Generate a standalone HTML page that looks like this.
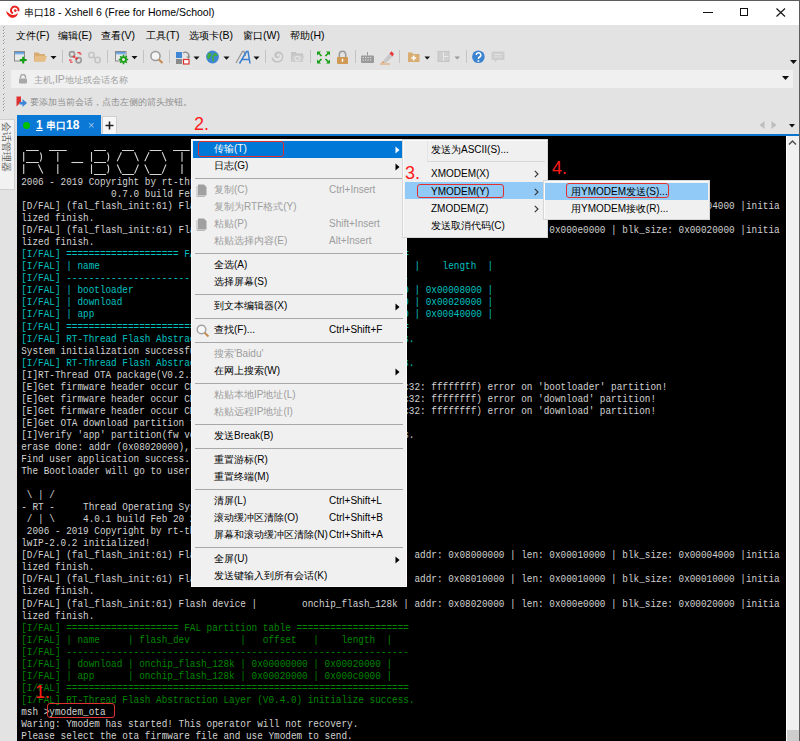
<!DOCTYPE html>
<html><head><meta charset="utf-8"><style>
*{margin:0;padding:0;box-sizing:border-box}
html,body{width:800px;height:741px;overflow:hidden}
body{position:relative;background:#e3e3e3;font-family:"Liberation Sans",sans-serif;font-size:11px;color:#000}
.a{position:absolute}
.t{position:absolute;white-space:pre;font-family:"Liberation Mono",monospace;font-size:11.665px;line-height:12px;transform:scaleX(0.80314);transform-origin:0 0}
.mi{position:absolute;white-space:nowrap;font-size:10px;line-height:15px}
.cj{font-size:9.7px}
.s9 .cj{font-size:9.45px}
.num{position:absolute;font-size:18px;line-height:20px;color:#ff1a1a}
.ui{position:absolute;white-space:nowrap;font-size:10.5px;line-height:14px}
</style></head>
<body>
<div class="a" style="left:0;top:0;width:800px;height:1px;background:#5c5c5c"></div>
<div class="a" style="left:0;top:1px;width:799px;height:24px;background:#fff"></div>
<div class="a" style="left:799px;top:0;width:1px;height:741px;background:#5c5c5c"></div>

<!-- title -->
<svg class="a" style="left:0;top:0" width="24" height="24" viewBox="0 0 24 24">
 <path d="M6.2 10.9 C6.8 15.6 10.4 18.1 13.6 17.7 C16.2 17.4 18 15.2 17.8 12.8 C16.6 14.5 14.6 15.3 12.5 14.9 C10 14.4 8.4 12.6 6.2 10.9 Z" fill="#e8231e"/>
 <path d="M18.3 11.3 A3.7 3.7 0 1 0 12.9 13.4" fill="none" stroke="#e8231e" stroke-width="1.9"/>
 <circle cx="15.3" cy="10.6" r="1.3" fill="#e8231e"/>
</svg>
<div class="ui" style="left:23.5px;top:5px;font-size:10.5px;line-height:15px;color:#000"><span class="cj">串口</span>18 - Xshell 6 (Free for Home/School)</div>
<div class="a" style="left:703px;top:12px;width:10px;height:1px;background:#111"></div>
<div class="a" style="left:740px;top:8px;width:8px;height:8px;border:1px solid #111"></div>
<svg class="a" style="left:776px;top:8px" width="10" height="9" viewBox="0 0 10 9"><path d="M0.5 0.5 L9 8.5 M9 0.5 L0.5 8.5" stroke="#111" stroke-width="1.1"/></svg>
<!-- grip -->
<svg class="a" style="left:0;top:0" width="8" height="116"><rect x="3" y="27" width="1" height="1" fill="#909090"/><rect x="4" y="26" width="1" height="1" fill="#b4b4b4"/><rect x="4" y="27" width="1" height="1" fill="#f2f2f2"/><rect x="3" y="30" width="1" height="1" fill="#909090"/><rect x="4" y="29" width="1" height="1" fill="#b4b4b4"/><rect x="4" y="30" width="1" height="1" fill="#f2f2f2"/><rect x="3" y="33" width="1" height="1" fill="#909090"/><rect x="4" y="32" width="1" height="1" fill="#b4b4b4"/><rect x="4" y="33" width="1" height="1" fill="#f2f2f2"/><rect x="3" y="36" width="1" height="1" fill="#909090"/><rect x="4" y="35" width="1" height="1" fill="#b4b4b4"/><rect x="4" y="36" width="1" height="1" fill="#f2f2f2"/><rect x="3" y="40" width="1" height="1" fill="#909090"/><rect x="4" y="39" width="1" height="1" fill="#b4b4b4"/><rect x="4" y="40" width="1" height="1" fill="#f2f2f2"/><rect x="3" y="43" width="1" height="1" fill="#909090"/><rect x="4" y="42" width="1" height="1" fill="#b4b4b4"/><rect x="4" y="43" width="1" height="1" fill="#f2f2f2"/><rect x="3" y="49" width="1" height="1" fill="#909090"/><rect x="4" y="48" width="1" height="1" fill="#b4b4b4"/><rect x="4" y="49" width="1" height="1" fill="#f2f2f2"/><rect x="3" y="52" width="1" height="1" fill="#909090"/><rect x="4" y="51" width="1" height="1" fill="#b4b4b4"/><rect x="4" y="52" width="1" height="1" fill="#f2f2f2"/><rect x="3" y="56" width="1" height="1" fill="#909090"/><rect x="4" y="55" width="1" height="1" fill="#b4b4b4"/><rect x="4" y="56" width="1" height="1" fill="#f2f2f2"/><rect x="3" y="59" width="1" height="1" fill="#909090"/><rect x="4" y="58" width="1" height="1" fill="#b4b4b4"/><rect x="4" y="59" width="1" height="1" fill="#f2f2f2"/><rect x="3" y="62" width="1" height="1" fill="#909090"/><rect x="4" y="61" width="1" height="1" fill="#b4b4b4"/><rect x="4" y="62" width="1" height="1" fill="#f2f2f2"/><rect x="3" y="65" width="1" height="1" fill="#909090"/><rect x="4" y="64" width="1" height="1" fill="#b4b4b4"/><rect x="4" y="65" width="1" height="1" fill="#f2f2f2"/><rect x="3" y="72" width="1" height="1" fill="#909090"/><rect x="4" y="71" width="1" height="1" fill="#b4b4b4"/><rect x="4" y="72" width="1" height="1" fill="#f2f2f2"/><rect x="3" y="75" width="1" height="1" fill="#909090"/><rect x="4" y="74" width="1" height="1" fill="#b4b4b4"/><rect x="4" y="75" width="1" height="1" fill="#f2f2f2"/><rect x="3" y="78" width="1" height="1" fill="#909090"/><rect x="4" y="77" width="1" height="1" fill="#b4b4b4"/><rect x="4" y="78" width="1" height="1" fill="#f2f2f2"/><rect x="3" y="81" width="1" height="1" fill="#909090"/><rect x="4" y="80" width="1" height="1" fill="#b4b4b4"/><rect x="4" y="81" width="1" height="1" fill="#f2f2f2"/><rect x="3" y="85" width="1" height="1" fill="#909090"/><rect x="4" y="84" width="1" height="1" fill="#b4b4b4"/><rect x="4" y="85" width="1" height="1" fill="#f2f2f2"/><rect x="3" y="88" width="1" height="1" fill="#909090"/><rect x="4" y="87" width="1" height="1" fill="#b4b4b4"/><rect x="4" y="88" width="1" height="1" fill="#f2f2f2"/><rect x="3" y="94" width="1" height="1" fill="#909090"/><rect x="4" y="93" width="1" height="1" fill="#b4b4b4"/><rect x="4" y="94" width="1" height="1" fill="#f2f2f2"/><rect x="3" y="98" width="1" height="1" fill="#909090"/><rect x="4" y="97" width="1" height="1" fill="#b4b4b4"/><rect x="4" y="98" width="1" height="1" fill="#f2f2f2"/><rect x="3" y="101" width="1" height="1" fill="#909090"/><rect x="4" y="100" width="1" height="1" fill="#b4b4b4"/><rect x="4" y="101" width="1" height="1" fill="#f2f2f2"/><rect x="3" y="104" width="1" height="1" fill="#909090"/><rect x="4" y="103" width="1" height="1" fill="#b4b4b4"/><rect x="4" y="104" width="1" height="1" fill="#f2f2f2"/><rect x="3" y="107" width="1" height="1" fill="#909090"/><rect x="4" y="106" width="1" height="1" fill="#b4b4b4"/><rect x="4" y="107" width="1" height="1" fill="#f2f2f2"/><rect x="3" y="110" width="1" height="1" fill="#909090"/><rect x="4" y="109" width="1" height="1" fill="#b4b4b4"/><rect x="4" y="110" width="1" height="1" fill="#f2f2f2"/></svg>
<!-- menu bar -->
<div class="ui" style="left:16px;top:28px;color:#000"><span class="cj">文件</span>(F)</div>
<div class="ui" style="left:58px;top:28px;color:#000"><span class="cj">编辑</span>(E)</div>
<div class="ui" style="left:101px;top:28px;color:#000"><span class="cj">查看</span>(V)</div>
<div class="ui" style="left:146px;top:28px;color:#000"><span class="cj">工具</span>(T)</div>
<div class="ui" style="left:189px;top:28px;color:#000"><span class="cj">选项卡</span>(B)</div>
<div class="ui" style="left:243px;top:28px;color:#000"><span class="cj">窗口</span>(W)</div>
<div class="ui" style="left:290px;top:28px;color:#000"><span class="cj">帮助</span>(H)</div>
<!-- toolbar -->
<svg class="a" style="left:0;top:0" width="520" height="70" viewBox="0 0 520 70">
 <defs>
  <linearGradient id="wb" x1="0" y1="0" x2="0" y2="1"><stop offset="0" stop-color="#4b8fd6"/><stop offset="1" stop-color="#9cc8f0"/></linearGradient>
 </defs>
 <g fill="#c4c4c4"><rect x="62" y="50" width="1" height="13"/><rect x="107" y="50" width="1" height="13"/><rect x="143" y="50" width="1" height="13"/><rect x="169" y="50" width="1" height="13"/><rect x="265" y="50" width="1" height="13"/><rect x="310" y="50" width="1" height="13"/><rect x="355" y="50" width="1" height="13"/><rect x="399" y="50" width="1" height="13"/><rect x="466" y="50" width="1" height="13"/></g>
 <!-- new session -->
 <rect x="14.5" y="51.5" width="10" height="9.5" fill="#e9e9e9" stroke="#8a8a8a"/>
 <rect x="15" y="52" width="9" height="2.6" fill="url(#wb)"/>
 <path d="M23.2 56.8 V63.5 M19.8 60.1 H26.6" stroke="#12a012" stroke-width="2"/>
 <!-- folder -->
 <path d="M34 52.5 H38.5 L39.8 54 H45 V61.5 H34 Z" fill="#d9ad72"/>
 <path d="M35.5 56 H47 L45 61.5 H34 Z" fill="#e6bd85"/>
 <g fill="#111"><path d="M50.5 56 H56.5 L53.5 59.2 Z"/><path d="M131.5 56 H137.5 L134.5 59.2 Z"/><path d="M193.5 56.5 H199.5 L196.5 59.7 Z"/><path d="M223.5 56.5 H229.5 L226.5 59.7 Z"/><path d="M253.5 56.5 H259.5 L256.5 59.7 Z"/><path d="M424.5 56.5 H430 L427.2 59.5 Z"/></g>
 <path d="M454.5 56.5 H460 L457.2 59.5 Z" fill="#9a9a9a"/>
 <!-- disconnect -->
 <g fill="none" stroke="#9c9c9c" stroke-width="1.7"><circle cx="72" cy="54.3" r="2.6"/><circle cx="78.6" cy="60.2" r="2.6"/></g>
 <g fill="#e8363a"><rect x="73" y="55.5" width="2.2" height="2.2" transform="rotate(45 74 56.6)"/><rect x="75.5" y="57.5" width="2.2" height="2.2" transform="rotate(45 76.6 58.6)"/><rect x="77.5" y="52" width="3" height="1.4"/><rect x="79.5" y="53.5" width="2" height="1.2"/><rect x="69" y="59.5" width="2.5" height="1.2"/><rect x="70" y="61.5" width="2.5" height="1.2"/></g>
 <!-- reconnect -->
 <g fill="none" stroke="#c4c4c4" stroke-width="1.6"><circle cx="91.5" cy="55" r="2.7"/><circle cx="97.6" cy="60" r="2.7"/><path d="M93.5 56.8 L95.7 58.3"/></g>
 <!-- properties -->
 <rect x="115.5" y="51.5" width="10.5" height="9.5" fill="#e9e9e9" stroke="#8a8a8a"/>
 <rect x="116" y="52" width="9.5" height="2.6" fill="url(#wb)"/>
 <g transform="translate(123.5 59.5)"><circle r="3.3" fill="#19a019"/><g stroke="#19a019" stroke-width="1.6"><path d="M0 -4.7 V4.7 M-4.7 0 H4.7 M-3.3 -3.3 L3.3 3.3 M-3.3 3.3 L3.3 -3.3"/></g><circle r="1.5" fill="#e9e9e9"/></g>
 <!-- magnifier -->
 <circle cx="155.5" cy="56" r="4.6" fill="#f4f4f4" stroke="#9a9a9a" stroke-width="1.5"/>
 <path d="M158.8 59.5 L162.5 63" stroke="#c98a4a" stroke-width="2"/>
 <!-- layout -->
 <rect x="176" y="52" width="6" height="6" fill="#3f86d4"/>
 <rect x="176" y="59" width="6" height="5" fill="#8a8a8a"/>
 <rect x="183.5" y="59.5" width="5.5" height="4.5" fill="#fff" stroke="#e03030" stroke-width="1.2"/>
 <path d="M183 53 A3.5 3.5 0 0 1 188.5 57" fill="none" stroke="#8a8a8a" stroke-width="1.3"/>
 <path d="M186.5 56.5 L190.5 56.5 L188.5 59 Z" fill="#8a8a8a"/>
 <!-- globe -->
 <circle cx="212.5" cy="57" r="6.4" fill="#3f86d4"/>
 <path d="M208 53.5 C210 52.5 212 53.5 211.5 55.5 C211 57 209.5 56.5 209.5 58.5 C209 60 207.5 59 207 57 Z M213.5 52.5 C215.5 52.8 217.5 54.5 218 56 C216.5 56.5 215 55.5 214 56.5 C213 57.8 215 59.5 214 61.5 C213 62.5 212.5 61 212.5 59.5 C212 58 211.5 57.5 212.5 56 C213.5 55 214 54 213.5 52.5 Z" fill="#3fae3f"/>
 <!-- font A -->
 <path d="M236 63 L242.5 51.5 L244 51.5 L245.5 56" fill="none" stroke="#9a9a9a" stroke-width="1.3"/>
 <path d="M239.5 63.5 L246.5 51.5 L248 51.5 L250 63.5 M242 59.5 H249" fill="none" stroke="#3a7fd0" stroke-width="1.5"/>
 <!-- gray swirl -->
 <path d="M271.5 57.5 C272 61.5 275 63 278 62.6 C281 62.2 283.6 59.6 283.4 56.4 C283.2 53.2 280.6 51.2 278 51.4 C275.5 51.6 274 53.6 274.4 55.8 C274.8 58 277.4 58.8 279 57.6 C280.2 56.6 280 54.8 278.8 54.4 C279.8 55.6 278.8 57 277.6 56.6 C276.4 56.2 276.4 54.6 277.6 53.8 C279.4 52.8 282 54 282 56.6 C282 59.6 279.6 61.4 277.4 61.2 C275 61 273.4 59.6 273.2 57.5 Z" fill="#c2c2c2"/>
 <!-- gray folder -->
 <path d="M291 52 H295.5 L297 53.5 H303 V62 H291 Z" fill="#c4c4c4"/>
 <path d="M292.5 55.5 H304.5 L302.5 62 H291 Z" fill="#cfcfcf"/>
 <circle cx="297.5" cy="58.5" r="2.4" fill="none" stroke="#e9e9e9" stroke-width="1"/>
 <!-- fullscreen -->
 <g stroke="#18a018" stroke-width="1.7" fill="none"><path d="M318 52.5 L321.5 56 M325.5 56 L329 52.5 M318 62.5 L321.5 59 M325.5 59 L329 62.5"/></g>
 <g fill="#18a018"><path d="M317 51.5 H321 L317 55.5 Z"/><path d="M330 51.5 H326 L330 55.5 Z"/><path d="M317 63.5 H321 L317 59.5 Z"/><path d="M330 63.5 H326 L330 59.5 Z"/></g>
 <!-- lock -->
 <path d="M339.3 57 V54.5 A3.2 3.2 0 0 1 345.7 54.5 V57" fill="none" stroke="#9a9a9a" stroke-width="1.5"/>
 <rect x="337" y="57" width="11" height="7" rx="0.8" fill="#d09a55"/>
 <rect x="341.8" y="58.8" width="1.4" height="3" fill="#fff"/>
 <!-- keyboard -->
 <rect x="361" y="55.5" width="13" height="7.5" rx="1" fill="#9a9a9a"/>
 <rect x="367" y="52" width="1" height="3.5" fill="#9a9a9a"/>
 <g fill="#e3e3e3"><rect x="362.5" y="57" width="1.2" height="1"/><rect x="365" y="57" width="1.2" height="1"/><rect x="367.5" y="57" width="1.2" height="1"/><rect x="370" y="57" width="1.2" height="1"/><rect x="362.5" y="59.5" width="1.2" height="1"/><rect x="365" y="59.5" width="1.2" height="1"/><rect x="367.5" y="59.5" width="1.2" height="1"/><rect x="370" y="59.5" width="1.2" height="1"/></g>
 <!-- highlighter -->
 <path d="M383 61 L389.5 53.5 L392.5 56.5 L386 63 Z" fill="#c8c8c8"/>
 <path d="M389.5 53.5 L391.5 51.3 L394 54 L392.5 56.5 Z" fill="#e83a3a"/>
 <path d="M383 61 L381.5 63 L385 63 Z" fill="#d9a060"/>
 <rect x="380" y="63.5" width="10" height="1" fill="#e0a060"/>
 <!-- folder plus -->
 <path d="M408 52.5 H412 L413.3 54 H419.5 V62 H408 Z" fill="#d9ad72"/>
 <path d="M413.7 55.5 V60.5 M411.2 58 H416.2" stroke="#fff" stroke-width="1.6"/>
 <!-- gray layout -->
 <rect x="438" y="51.5" width="11" height="10" fill="#cfcfcf" stroke="#c4c4c4"/>
 <path d="M443.5 52 V61 M443.5 56.5 H448.5" stroke="#e9e9e9" stroke-width="1"/>
 <!-- help -->
 <circle cx="478.4" cy="56.8" r="6.3" fill="#3d84d0"/>
 <path d="M476.2 55 A2.3 2.2 0 1 1 479.5 57 C478.6 57.5 478.4 58 478.4 59" fill="none" stroke="#fff" stroke-width="1.5"/>
 <rect x="477.6" y="60.2" width="1.6" height="1.6" fill="#fff"/>
 <!-- chat -->
 <rect x="491.5" y="51.5" width="13" height="8.5" rx="1.5" fill="#cdcdcd"/>
 <path d="M494.5 59.5 L494.5 62.5 L497.5 59.5 Z" fill="#cdcdcd"/>
 <path d="M494 54.5 H502 M494 57 H502" stroke="#e6e6e6" stroke-width="0.9"/>
</svg>
<!-- address -->
<div class="a" style="left:11px;top:70px;width:782px;height:18px;background:#f0f0f0"></div>
<svg class="a" style="left:18px;top:74px" width="10" height="10" viewBox="0 0 10 10"><path d="M2.5 4.5 V3 A2.5 2.5 0 0 1 7.5 3 V4.5" fill="none" stroke="#a8a8a8" stroke-width="1.4"/><rect x="1" y="4.5" width="8" height="5" rx="1" fill="#a8a8a8"/></svg>
<div class="ui s9" style="left:34px;top:72px;color:#a0a0a0"><span class="cj">主机</span>,IP<span class="cj">地址或会话名称</span></div>
<svg class="a" style="left:782px;top:76px" width="7" height="4"><path d="M0 0 H7 L3.5 4 Z" fill="#111"/></svg>
<svg class="a" style="left:790px;top:60px" width="7" height="4"><path d="M0 0 H7 L3.5 4 Z" fill="#111"/></svg>
<!-- info bar -->
<svg class="a" style="left:16px;top:96px" width="12" height="12" viewBox="0 0 12 12"><path d="M0.5 0.5 H5 V6 L0.5 10.5 Z" fill="#e03030"/><path d="M3.5 6 H6.5 V3 L11 7 L6.5 11 V8.5 H3.5 Z" fill="#3c86d6"/></svg>
<div class="ui s9" style="left:30px;top:94px;color:#8e8e8e"><span class="cj">要添加当前会话，点击左侧的箭头按钮。</span></div>
<!-- side tab -->
<div class="a" style="left:0;top:119px;width:15px;height:71px;background:#f2f2f2;border:1px solid #d0d0d0;border-left:none"></div>
<div class="a" style="left:1px;top:122px;width:11px;height:48px;writing-mode:vertical-rl;text-orientation:sideways;font-size:9.4px;line-height:11px;color:#5a5a5a;white-space:nowrap"><span class="cj">会话管理器</span></div>
<!-- tabs -->
<div class="a" style="left:17px;top:115px;width:84px;height:20px;background:#0a78d4"></div>
<div class="a" style="left:23px;top:122px;width:7px;height:7px;border-radius:50%;background:#00c000"></div>
<div class="ui" style="left:36px;top:118px;font-size:12px;font-weight:bold;line-height:15px;color:#fff"><span style="text-decoration:underline">1</span> <span class="cj">串口</span>18</div>
<div class="ui" style="left:88px;top:118px;font-size:11px;line-height:14px;color:#9cc4ea">×</div>
<div class="a" style="left:102px;top:116px;width:15px;height:18px;background:#f7f7f7;border:1px solid #cfcfcf;border-bottom:none"></div>
<svg class="a" style="left:105px;top:121px" width="9" height="9"><path d="M4.5 0.5 V8.5 M0.5 4.5 H8.5" stroke="#222" stroke-width="1.6"/></svg>
<svg class="a" style="left:759px;top:121px" width="6" height="8"><path d="M5.5 0 V8 L0.5 4 Z" fill="#bdbdbd"/></svg>
<svg class="a" style="left:771px;top:121px" width="6" height="8"><path d="M0.5 0 V8 L5.5 4 Z" fill="#bdbdbd"/></svg>
<svg class="a" style="left:789px;top:124px" width="6" height="4"><path d="M0 0 H6 L3 3.5 Z" fill="#111"/></svg>
<!-- terminal -->
<div class="a" style="left:17px;top:136px;width:769px;height:605px;background:#000"></div>
<div class="a" style="left:17px;top:134px;width:782px;height:2px;background:#0a74cf"></div>
<div class="a" style="left:786px;top:136px;width:13px;height:605px;background:#f0f0f0;border-left:1px solid #fff"></div>
<div class="a" style="left:787px;top:730px;width:12px;height:11px;background:#cdcdcd"></div>
<svg class="a" style="left:788px;top:139px" width="9" height="7"><path d="M1 5.5 L4.5 2 L8 5.5" fill="none" stroke="#505050" stroke-width="1.5"/></svg>
<div class="t" style="top:176.00px;left:21px;transform:translateX(0.23px) scaleX(0.80314);color:#d2d2d2">2006 - 2019 Copyright by rt-thread team</div>
<div class="t" style="top:188.00px;left:21px;transform:translateX(0.23px) scaleX(0.80314);color:#d2d2d2">                0.7.0 build Feb 20 2020</div>
<div class="t" style="top:200.00px;left:21px;transform:translateX(0.23px) scaleX(0.80314);color:#d2d2d2">[D/FAL] (fal_flash_init:61) Flash device |         onchip_flash_16k | addr: 0x08000000 | len: 0x00010000 | blk_size: 0x00004000 |initia</div>
<div class="t" style="top:212.00px;left:21px;transform:translateX(0.23px) scaleX(0.80314);color:#d2d2d2">lized finish.</div>
<div class="t" style="top:224.00px;left:21px;transform:translateX(0.23px) scaleX(0.80314);color:#d2d2d2">[D/FAL] (fal_flash_init:61) Flash device |        onchip_flash_128k | addr: 0x08020000 | len: 0x000e0000 | blk_size: 0x00020000 |initia</div>
<div class="t" style="top:236.00px;left:21px;transform:translateX(0.23px) scaleX(0.80314);color:#d2d2d2">lized finish.</div>
<div class="t" style="top:248.00px;left:21px;transform:translateX(0.23px) scaleX(0.80314);color:#00c0c0">[I/FAL] ==================== FAL partition table ====================</div>
<div class="t" style="top:260.00px;left:21px;transform:translateX(0.23px) scaleX(0.80314);color:#00c0c0">[I/FAL] | name                 | flash_dev               |   offset   |    length  |</div>
<div class="t" style="top:272.00px;left:21px;transform:translateX(0.23px) scaleX(0.80314);color:#00c0c0">[I/FAL] -------------------------------------------------------------</div>
<div class="t" style="top:284.00px;left:21px;transform:translateX(0.23px) scaleX(0.80314);color:#00c0c0">[I/FAL] | bootloader           | onchip_flash_16k        | 0x00000000 | 0x00008000 |</div>
<div class="t" style="top:296.00px;left:21px;transform:translateX(0.23px) scaleX(0.80314);color:#00c0c0">[I/FAL] | download             | onchip_flash_128k       | 0x00008000 | 0x00020000 |</div>
<div class="t" style="top:308.00px;left:21px;transform:translateX(0.23px) scaleX(0.80314);color:#00c0c0">[I/FAL] | app                  | onchip_flash_128k       | 0x00028000 | 0x00040000 |</div>
<div class="t" style="top:321.00px;left:21px;transform:translateX(0.23px) scaleX(0.80314);color:#00c0c0">[I/FAL] =============================================================</div>
<div class="t" style="top:333.00px;left:21px;transform:translateX(0.23px) scaleX(0.80314);color:#00c0c0">[I/FAL] RT-Thread Flash Abstraction Layer (V0.3.0) initialize success.</div>
<div class="t" style="top:345.00px;left:21px;transform:translateX(0.23px) scaleX(0.80314);color:#d2d2d2">System initialization successful.</div>
<div class="t" style="top:357.00px;left:21px;transform:translateX(0.23px) scaleX(0.80314);color:#00c0c0">[I/FAL] RT-Thread Flash Abstraction Layer (V0.3.0) initialize success.</div>
<div class="t" style="top:369.00px;left:21px;transform:translateX(0.23px) scaleX(0.80314);color:#d2d2d2">[I]RT-Thread OTA package(V0.2.1) initialize success.</div>
<div class="t" style="top:381.00px;left:21px;transform:translateX(0.23px) scaleX(0.80314);color:#d2d2d2">[E]Get firmware header occur CRC32(calc.crc: ffffffff != hdr.info_crc32: ffffffff) error on &#x27;bootloader&#x27; partition!</div>
<div class="t" style="top:393.00px;left:21px;transform:translateX(0.23px) scaleX(0.80314);color:#d2d2d2">[E]Get firmware header occur CRC32(calc.crc: ffffffff != hdr.info_crc32: ffffffff) error on &#x27;download&#x27; partition!</div>
<div class="t" style="top:405.00px;left:21px;transform:translateX(0.23px) scaleX(0.80314);color:#d2d2d2">[E]Get firmware header occur CRC32(calc.crc: ffffffff != hdr.info_crc32: ffffffff) error on &#x27;download&#x27; partition!</div>
<div class="t" style="top:417.00px;left:21px;transform:translateX(0.23px) scaleX(0.80314);color:#d2d2d2">[E]Get OTA download partition firmware filed!</div>
<div class="t" style="top:429.00px;left:21px;transform:translateX(0.23px) scaleX(0.80314);color:#d2d2d2">[I]Verify &#x27;app&#x27; partition(fw ver: 1.0, timestamp: 1581835839) success.</div>
<div class="t" style="top:441.00px;left:21px;transform:translateX(0.23px) scaleX(0.80314);color:#d2d2d2">erase done: addr (0x08020000), size 262144</div>
<div class="t" style="top:453.00px;left:21px;transform:translateX(0.23px) scaleX(0.80314);color:#d2d2d2">Find user application success.</div>
<div class="t" style="top:465.00px;left:21px;transform:translateX(0.23px) scaleX(0.80314);color:#d2d2d2">The Bootloader will go to user application.</div>
<div class="t" style="top:489.00px;left:21px;transform:translateX(0.23px) scaleX(0.80314);color:#d2d2d2"> \ | /</div>
<div class="t" style="top:501.00px;left:21px;transform:translateX(0.23px) scaleX(0.80314);color:#d2d2d2">- RT -     Thread Operating System</div>
<div class="t" style="top:513.00px;left:21px;transform:translateX(0.23px) scaleX(0.80314);color:#d2d2d2"> / | \     4.0.1 build Feb 20 2020</div>
<div class="t" style="top:525.00px;left:21px;transform:translateX(0.23px) scaleX(0.80314);color:#d2d2d2"> 2006 - 2019 Copyright by rt-thread team</div>
<div class="t" style="top:537.00px;left:21px;transform:translateX(0.23px) scaleX(0.80314);color:#d2d2d2">lwIP-2.0.2 initialized!</div>
<div class="t" style="top:549.00px;left:21px;transform:translateX(0.23px) scaleX(0.80314);color:#d2d2d2">[D/FAL] (fal_flash_init:61) Flash device |         onchip_flash_16k | addr: 0x08000000 | len: 0x00010000 | blk_size: 0x00004000 |initia</div>
<div class="t" style="top:561.00px;left:21px;transform:translateX(0.23px) scaleX(0.80314);color:#d2d2d2">lized finish.</div>
<div class="t" style="top:573.00px;left:21px;transform:translateX(0.23px) scaleX(0.80314);color:#d2d2d2">[D/FAL] (fal_flash_init:61) Flash device |         onchip_flash_64k | addr: 0x08010000 | len: 0x00010000 | blk_size: 0x00010000 |initia</div>
<div class="t" style="top:585.00px;left:21px;transform:translateX(0.23px) scaleX(0.80314);color:#d2d2d2">lized finish.</div>
<div class="t" style="top:598.00px;left:21px;transform:translateX(0.23px) scaleX(0.80314);color:#d2d2d2">[D/FAL] (fal_flash_init:61) Flash device |        onchip_flash_128k | addr: 0x08020000 | len: 0x000e0000 | blk_size: 0x00020000 |initia</div>
<div class="t" style="top:610.00px;left:21px;transform:translateX(0.23px) scaleX(0.80314);color:#d2d2d2">lized finish.</div>
<div class="t" style="top:622.00px;left:21px;transform:translateX(0.23px) scaleX(0.80314);color:#008600">[I/FAL] ==================== FAL partition table ====================</div>
<div class="t" style="top:634.00px;left:21px;transform:translateX(0.23px) scaleX(0.80314);color:#008600">[I/FAL] | name     | flash_dev         |   offset   |    length  |</div>
<div class="t" style="top:646.00px;left:21px;transform:translateX(0.23px) scaleX(0.80314);color:#008600">[I/FAL] -------------------------------------------------------------</div>
<div class="t" style="top:658.00px;left:21px;transform:translateX(0.23px) scaleX(0.80314);color:#008600">[I/FAL] | download | onchip_flash_128k | 0x00000000 | 0x00020000 |</div>
<div class="t" style="top:670.00px;left:21px;transform:translateX(0.23px) scaleX(0.80314);color:#008600">[I/FAL] | app      | onchip_flash_128k | 0x00020000 | 0x000c0000 |</div>
<div class="t" style="top:682.00px;left:21px;transform:translateX(0.23px) scaleX(0.80314);color:#008600">[I/FAL] =============================================================</div>
<div class="t" style="top:694.00px;left:21px;transform:translateX(0.23px) scaleX(0.80314);color:#008600">[I/FAL] RT-Thread Flash Abstraction Layer (V0.4.0) initialize success.</div>
<div class="t" style="top:706.00px;left:21px;transform:translateX(0.23px) scaleX(0.80314);color:#d2d2d2">msh &gt;ymodem_ota</div>
<div class="t" style="top:718.00px;left:21px;transform:translateX(0.23px) scaleX(0.80314);color:#d2d2d2">Waring: Ymodem has started! This operator will not recovery.</div>
<div class="t" style="top:730.00px;left:21px;transform:translateX(0.23px) scaleX(0.80314);color:#d2d2d2">Please select the ota firmware file and use Ymodem to send.</div>
<svg class="a" style="left:0;top:0" width="200" height="180" viewBox="0 0 200 180"><g fill="none" stroke="#d4d4d4" stroke-width="1.1" stroke-linecap="butt">
<path d="M23.7 152 V161.8 M23.7 164.3 V174 M26 150.5 H38.8 M26 162.5 H38.8 M40.4 152.5 Q42.6 157 40.4 161.5 M38.4 164.5 L42.8 173.6"/>
<path d="M49 150.5 H66.8 M57.8 152 V161.8 M57.8 164.3 V174"/>
<path d="M71.4 162.5 H83.2"/>
<path d="M91.5 152 V161.8 M91.5 164.3 V174 M94 150.5 H106 M94 162.5 H106 M94 174.5 H106 M107.6 152.5 Q109.8 157 107.6 161.5 M107.6 164.5 Q109.8 169 107.6 173.5"/>
<path d="M122 150.5 H134 M122 174.5 H134 M117.2 161.2 L121.4 152.3 M134.6 152.3 L138.4 161.2 M117.2 164.5 L121.4 173.6 M134.6 173.6 L138.4 164.5"/>
<path d="M149.6 150.5 H161.6 M149.6 174.5 H161.6 M144.8 161.2 L149 152.3 M162.2 152.3 L166 161.2 M144.8 164.5 L149 173.6 M162.2 173.6 L166 164.5"/>
<path d="M173 150.5 H189.8 M182 152 V161.8 M182 164.3 V174"/>
</g></svg>
<div class="a" style="left:191px;top:139px;width:216px;height:448px;background:#f0f0f0;border:1px solid #fbfbfb"></div>
<div class="a" style="left:193px;top:141.0px;width:212px;height:17.0px;background:#0078d7"></div>
<div class="mi" style="left:214px;top:141.2px;color:#fff"><span class="cj">传输</span>(T)</div>
<svg class="a" style="left:395px;top:145.5px" width="5" height="8"><path d="M0.5 0.5 L4.5 4 L0.5 7.5 Z" fill="#fff"/></svg>
<div class="mi" style="left:214px;top:158.2px;color:#000"><span class="cj">日志</span>(G)</div>
<svg class="a" style="left:395px;top:162.5px" width="5" height="8"><path d="M0.5 0.5 L4.5 4 L0.5 7.5 Z" fill="#000"/></svg>
<div class="a" style="left:195px;top:178.0px;width:208px;height:1px;background:#a8a8a8"></div>
<div class="mi" style="left:214px;top:182.2px;color:#9d9d9d"><span class="cj">复制</span>(C)</div>
<div class="mi" style="left:329px;top:182.2px;color:#9d9d9d">Ctrl+Insert</div>
<svg class="a" style="left:196px;top:183.0px" width="12" height="14"><path d="M2 1.5 H8 L10.5 4 V12.5 H2 Z" fill="#a0a0a0"/><path d="M1 3 V13.5 H9" fill="none" stroke="#b8b8b8" stroke-width="1"/></svg>
<div class="mi" style="left:214px;top:199.2px;color:#9d9d9d"><span class="cj">复制为</span>RTF<span class="cj">格式</span>(Y)</div>
<div class="mi" style="left:214px;top:216.2px;color:#9d9d9d"><span class="cj">粘贴</span>(P)</div>
<div class="mi" style="left:329px;top:216.2px;color:#9d9d9d">Shift+Insert</div>
<svg class="a" style="left:196px;top:217.0px" width="12" height="14"><path d="M2 1.5 H8 L10.5 4 V12.5 H2 Z" fill="#a0a0a0"/><path d="M1 3 V13.5 H9" fill="none" stroke="#b8b8b8" stroke-width="1"/></svg>
<div class="mi" style="left:214px;top:233.2px;color:#9d9d9d"><span class="cj">粘贴选择内容</span>(E)</div>
<div class="mi" style="left:329px;top:233.2px;color:#9d9d9d">Alt+Insert</div>
<div class="a" style="left:195px;top:253.0px;width:208px;height:1px;background:#a8a8a8"></div>
<div class="mi" style="left:214px;top:257.2px;color:#000"><span class="cj">全选</span>(A)</div>
<div class="mi" style="left:214px;top:274.2px;color:#000"><span class="cj">选择屏幕</span>(S)</div>
<div class="a" style="left:195px;top:294.0px;width:208px;height:1px;background:#a8a8a8"></div>
<div class="mi" style="left:214px;top:298.2px;color:#000"><span class="cj">到文本编辑器</span>(X)</div>
<svg class="a" style="left:395px;top:302.5px" width="5" height="8"><path d="M0.5 0.5 L4.5 4 L0.5 7.5 Z" fill="#000"/></svg>
<div class="a" style="left:195px;top:318.0px;width:208px;height:1px;background:#a8a8a8"></div>
<div class="mi" style="left:214px;top:322.2px;color:#000"><span class="cj">查找</span>(F)...</div>
<div class="mi" style="left:329px;top:322.2px;color:#000">Ctrl+Shift+F</div>
<svg class="a" style="left:196px;top:323.5px" width="14" height="14"><circle cx="5.5" cy="5.5" r="4.3" fill="#f8f8f8" stroke="#a0a0a0" stroke-width="1.4"/><path d="M8.6 8.8 L12.5 12.5" stroke="#c48a4c" stroke-width="2"/></svg>
<div class="a" style="left:195px;top:342.0px;width:208px;height:1px;background:#a8a8a8"></div>
<div class="mi" style="left:214px;top:346.2px;color:#9d9d9d"><span class="cj">搜索</span>&#x27;Baidu&#x27;</div>
<div class="mi" style="left:214px;top:363.2px;color:#000"><span class="cj">在网上搜索</span>(W)</div>
<svg class="a" style="left:395px;top:367.5px" width="5" height="8"><path d="M0.5 0.5 L4.5 4 L0.5 7.5 Z" fill="#000"/></svg>
<div class="a" style="left:195px;top:383.0px;width:208px;height:1px;background:#a8a8a8"></div>
<div class="mi" style="left:214px;top:387.2px;color:#9d9d9d"><span class="cj">粘贴本地</span>IP<span class="cj">地址</span>(L)</div>
<div class="mi" style="left:214px;top:404.2px;color:#9d9d9d"><span class="cj">粘贴远程</span>IP<span class="cj">地址</span>(I)</div>
<div class="a" style="left:195px;top:424.0px;width:208px;height:1px;background:#a8a8a8"></div>
<div class="mi" style="left:214px;top:428.2px;color:#000"><span class="cj">发送</span>Break(B)</div>
<div class="a" style="left:195px;top:448.0px;width:208px;height:1px;background:#a8a8a8"></div>
<div class="mi" style="left:214px;top:452.2px;color:#000"><span class="cj">重置游标</span>(R)</div>
<div class="mi" style="left:214px;top:469.2px;color:#000"><span class="cj">重置终端</span>(M)</div>
<div class="a" style="left:195px;top:489.0px;width:208px;height:1px;background:#a8a8a8"></div>
<div class="mi" style="left:214px;top:493.2px;color:#000"><span class="cj">清屏</span>(L)</div>
<div class="mi" style="left:329px;top:493.2px;color:#000">Ctrl+Shift+L</div>
<div class="mi" style="left:214px;top:510.2px;color:#000"><span class="cj">滚动缓冲区清除</span>(O)</div>
<div class="mi" style="left:329px;top:510.2px;color:#000">Ctrl+Shift+B</div>
<div class="mi" style="left:214px;top:527.2px;color:#000"><span class="cj">屏幕和滚动缓冲区清除</span>(N)</div>
<div class="mi" style="left:329px;top:527.2px;color:#000">Ctrl+Shift+A</div>
<div class="a" style="left:195px;top:547.0px;width:208px;height:1px;background:#a8a8a8"></div>
<div class="mi" style="left:214px;top:551.2px;color:#000"><span class="cj">全屏</span>(U)</div>
<svg class="a" style="left:395px;top:555.5px" width="5" height="8"><path d="M0.5 0.5 L4.5 4 L0.5 7.5 Z" fill="#000"/></svg>
<div class="mi" style="left:214px;top:568.2px;color:#000"><span class="cj">发送键输入到所有会话</span>(K)</div>
<div class="a" style="left:198px;top:141px;width:86px;height:16px;border:1.5px solid #e03030;border-radius:3px"></div>
<div class="a" style="left:402px;top:139px;width:146px;height:99px;background:#f0f0f0;border:1px solid #d6d6d6;box-shadow:inset 1px 1px 0 #fcfcfc"></div>
<div class="a" style="left:427px;top:141px;width:1px;height:20px;background:#e4e4e4"></div>
<div class="a" style="left:427px;top:161px;width:118px;height:1px;background:#d8d8d8"></div>
<div class="a" style="left:405px;top:182px;width:138px;height:17px;background:#91c9f7"></div>
<div class="mi" style="left:431px;top:142.0px;color:#000"><span class="cj">发送为</span>ASCII(S)...</div>
<div class="mi" style="left:431px;top:166.3px;color:#000">XMODEM(X)</div>
<svg class="a" style="left:534px;top:170.3px" width="5" height="8"><path d="M0.8 0.8 L4 4 L0.8 7.2" fill="none" stroke="#333" stroke-width="1.1"/></svg>
<div class="mi" style="left:431px;top:183.5px;color:#000">YMODEM(Y)</div>
<svg class="a" style="left:534px;top:187.5px" width="5" height="8"><path d="M0.8 0.8 L4 4 L0.8 7.2" fill="none" stroke="#333" stroke-width="1.1"/></svg>
<div class="mi" style="left:431px;top:200.7px;color:#000">ZMODEM(Z)</div>
<svg class="a" style="left:534px;top:204.7px" width="5" height="8"><path d="M0.8 0.8 L4 4 L0.8 7.2" fill="none" stroke="#333" stroke-width="1.1"/></svg>
<div class="mi" style="left:431px;top:217.9px;color:#000"><span class="cj">发送取消代码</span>(C)</div>
<div class="a" style="left:417px;top:183.5px;width:87px;height:14.5px;border:1.5px solid #e03030;border-radius:3px"></div>
<div class="a" style="left:543px;top:180px;width:167px;height:40px;background:#f0f0f0;border:1px solid #d6d6d6;box-shadow:inset 1px 1px 0 #fcfcfc"></div>
<div class="a" style="left:545px;top:182.5px;width:163px;height:17px;background:#91c9f7"></div>
<div class="mi" style="left:571px;top:183.5px;color:#000"><span class="cj">用</span>YMODEM<span class="cj">发送</span>(S)...</div>
<div class="mi" style="left:571px;top:200.7px;color:#000"><span class="cj">用</span>YMODEM<span class="cj">接收</span>(R)...</div>
<div class="a" style="left:566px;top:183px;width:103px;height:14.5px;border:1.5px solid #e03030;border-radius:3px"></div>
<div class="num" style="left:194px;top:114px">2.</div>
<div class="num" style="left:405px;top:162.5px">3.</div>
<div class="num" style="left:552px;top:158px">4.</div>
<div class="num" style="left:35px;top:681.5px">1.</div>
<div class="a" style="left:47px;top:703px;width:68px;height:15px;border:1.5px solid #e03030;border-radius:3px"></div>
</body></html>
